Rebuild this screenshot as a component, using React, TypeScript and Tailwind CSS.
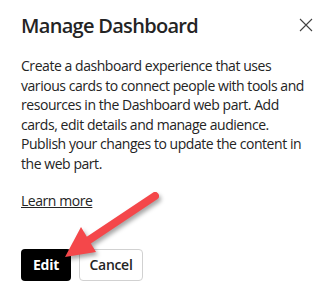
import React from "react";

const lines = [
  "Create a dashboard experience that uses",
  "various cards to connect people with tools and",
  "resources in the Dashboard web part. Add",
  "cards, edit details and manage audience.",
  "Publish your changes to update the content in",
  "the web part.",
];

export default function App() {
  return (
    <div className="relative w-[329px] h-[288px] bg-white overflow-hidden" style={{ fontFamily: '"Open Sans", "Noto Sans", sans-serif' }}>
      <div className="pl-[21px] pr-[16px] pt-[12px]">
        <div className="flex items-start justify-between">
          <h1 className="text-[20px] leading-[28px] font-semibold text-[#242424] tracking-[-0.7px]">Manage Dashboard</h1>
          <svg className="mt-[6px]" width="14" height="14" viewBox="0 0 14 14">
            <path d="M1 1 L13 13 M13 1 L1 13" stroke="#424242" strokeWidth="1.1" fill="none" />
          </svg>
        </div>
        <div className="mt-[16px] text-[14px] leading-[19.6px] text-[#242424] tracking-[-0.45px]">
          {lines.map((l) => (
            <div key={l} className="whitespace-nowrap">{l}</div>
          ))}
        </div>
        <a className="mt-[17px] inline-block text-[14px] leading-[20px] text-[#242424] underline tracking-[-0.45px]">Learn more</a>
        <div className="mt-[37px] flex gap-[8px]">
          <button className="w-[50px] h-[32px] rounded-[4px] bg-black text-white text-[14px] font-bold tracking-[-0.3px]">Edit</button>
          <button className="w-[64px] h-[32px] rounded-[4px] bg-white border border-[#d1d1d1] text-[#242424] text-[14px] font-semibold tracking-[-0.3px]">Cancel</button>
        </div>
      </div>
      <svg className="absolute left-0 top-0 pointer-events-none" width="329" height="288" viewBox="0 0 329 288" style={{ filter: "drop-shadow(2px 3px 2px rgba(0,0,0,0.35))" }}>
        <line x1="155" y1="196" x2="86" y2="242" stroke="#f4474a" strokeWidth="8" strokeLinecap="round" />
        <polygon points="65,257 81,227 96,252" fill="#f4474a" />
      </svg>
    </div>
  );
}
